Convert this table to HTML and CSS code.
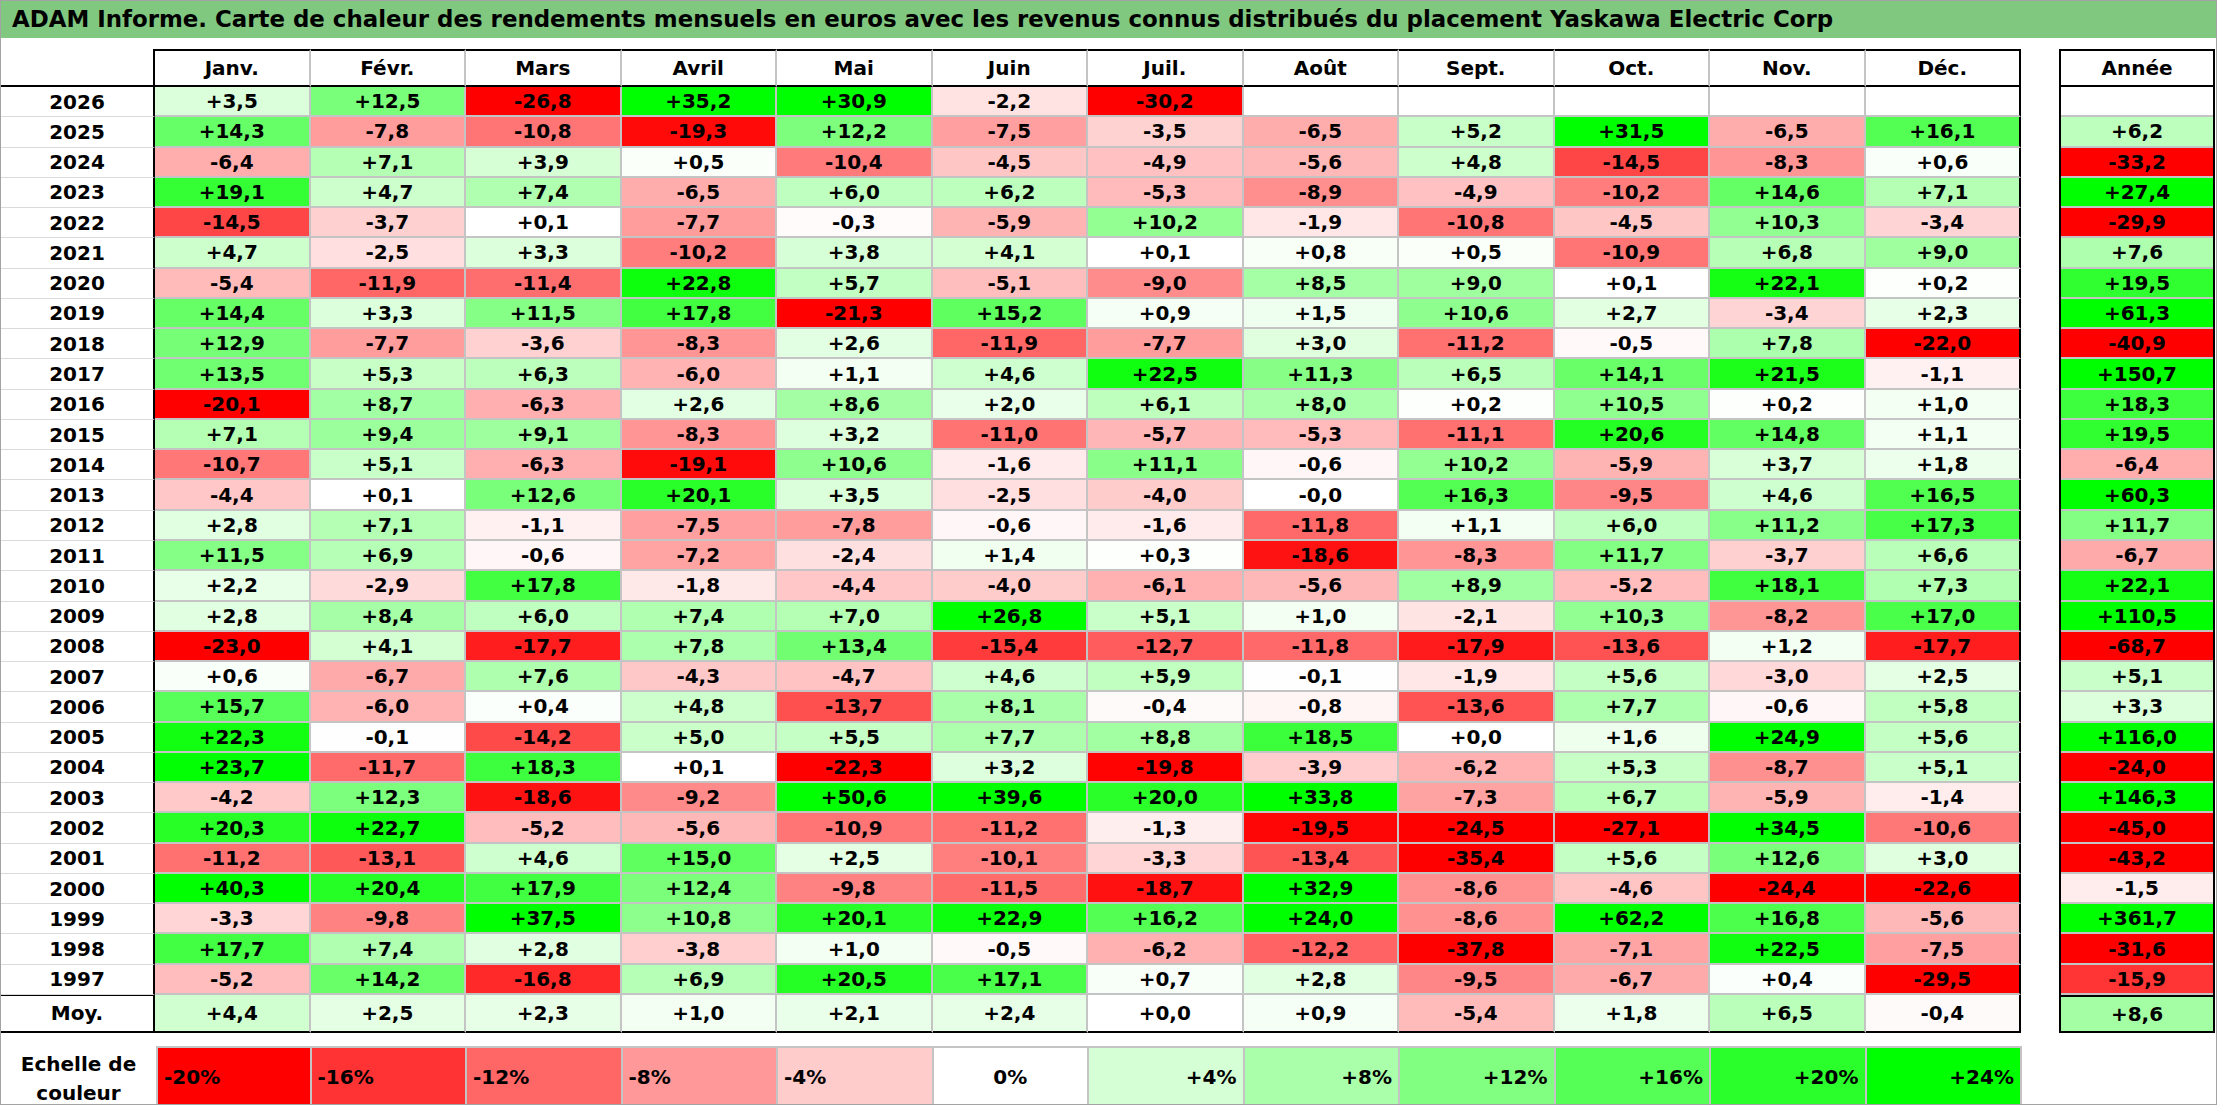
FILE: index.html
```html
<!DOCTYPE html>
<html lang="fr">
<head>
<meta charset="utf-8">
<title>ADAM Informe - Yaskawa Electric Corp</title>
<link rel="stylesheet" href="styles.css">
</head>
<body>
<div class="page">
  <div class="title">ADAM Informe. Carte de chaleur des rendements mensuels en euros avec les revenus connus distribués du placement Yaskawa Electric Corp</div>
  <div class="tables">
    <div class="main" id="main">
      <div class="corner"></div>
      <div class="mh">Janv.</div>
      <div class="mh">Févr.</div>
      <div class="mh">Mars</div>
      <div class="mh">Avril</div>
      <div class="mh">Mai</div>
      <div class="mh">Juin</div>
      <div class="mh">Juil.</div>
      <div class="mh">Août</div>
      <div class="mh">Sept.</div>
      <div class="mh">Oct.</div>
      <div class="mh">Nov.</div>
      <div class="mh last">Déc.</div>
    </div>
    <div class="annee" id="annee">
      <div class="ah">Année</div>
    </div>
  </div>
  <div class="legend">
    <div class="leglabel">Echelle de<br>couleur</div>
    <div class="lg neg" style="background:rgb(255,0,0)">-20%</div>
    <div class="lg neg" style="background:rgb(255,51,51)">-16%</div>
    <div class="lg neg" style="background:rgb(255,102,102)">-12%</div>
    <div class="lg neg" style="background:rgb(255,153,153)">-8%</div>
    <div class="lg neg" style="background:rgb(255,204,204)">-4%</div>
    <div class="lg zero" style="background:rgb(255,255,255)">0%</div>
    <div class="lg pos" style="background:rgb(213,255,213)">+4%</div>
    <div class="lg pos" style="background:rgb(170,255,170)">+8%</div>
    <div class="lg pos" style="background:rgb(128,255,128)">+12%</div>
    <div class="lg pos" style="background:rgb(85,255,85)">+16%</div>
    <div class="lg pos" style="background:rgb(43,255,43)">+20%</div>
    <div class="lg pos last" style="background:rgb(0,255,0)">+24%</div>
  </div>
</div>
<script src="script.js"></script>
</body>
</html>
```

FILE: styles.css
```css
html, body {
  margin: 0;
  padding: 0;
  background: #ffffff;
}

.page {
  width: 2217px;
  height: 1105px;
  box-sizing: border-box;
  border: 1px solid #a3a3a3;
  background: #ffffff;
  font-family: "DejaVu Sans", "Liberation Sans", sans-serif;
  font-weight: bold;
  color: #000000;
  overflow: hidden;
}

.title {
  height: 37px;
  line-height: 37px;
  background: #80c880;
  padding-left: 11px;
  font-size: 22.9px;
  white-space: nowrap;
}

.tables {
  display: flex;
  margin-top: 11px;
}

.main {
  width: 2020px;
  display: grid;
  grid-template-columns: 154px repeat(12, 155.5px);
  grid-template-rows: 38px repeat(30, 30.27px) 38px;
}

.main > div,
.annee > div,
.legend > div {
  box-sizing: border-box;
  display: flex;
  align-items: center;
  justify-content: center;
  font-size: 20px;
  white-space: nowrap;
}

.corner {
  border-right: 2px solid #000;
  border-bottom: 2px solid #000;
}

.mh {
  border-top: 2px solid #000;
  border-bottom: 2px solid #000;
  border-right: 2px solid #c4c4c4;
}

.mh.last {
  border-right: 2px solid #000;
}

.yl {
  border-right: 2px solid #000;
  border-bottom: 1px solid #dadada;
}

.c {
  border-right: 2px solid #c4c4c4;
  border-bottom: 2px solid #c4c4c4;
}

.c.last {
  border-right: 2px solid #000;
}

.yl.moy {
  border-top: 1px solid #000;
  border-bottom: 2px solid #000;
}

.c.moy {
  border-bottom: 2px solid #000;
}

.annee {
  width: 156px;
  margin-left: 38px;
  box-sizing: border-box;
  border: 2px solid #000;
  display: grid;
  grid-template-columns: 152px;
  grid-template-rows: 36px repeat(30, 30.27px) 36px;
}

.ah {
  border-bottom: 2px solid #000;
}

.ac {
  border-bottom: 2px solid #c4c4c4;
}

.ac.moy {
  border-top: 2px solid #000;
  border-bottom: none;
}

.legend {
  display: grid;
  grid-template-columns: 155px repeat(12, 155.5px);
  width: 2021px;
  height: 58px;
  margin-top: 13px;
}

.leglabel {
  flex-direction: column;
  text-align: center;
  line-height: 29px;
  padding-top: 4px;
}

.lg {
  border-top: 2px solid #c4c4c4;
  border-right: 2px solid #c4c4c4;
  padding: 0 6px 2px;
}

.lg:nth-child(2) {
  border-left: 2px solid #c4c4c4;
}

.legend > .lg.neg {
  justify-content: flex-start;
}

.legend > .lg.pos {
  justify-content: flex-end;
}
```

FILE: script.js
```js
(function () {
  var data = [
    ["2026", "+3,5 +12,5 -26,8 +35,2 +30,9 -2,2 -30,2 _ _ _ _ _", "_"],
    ["2025", "+14,3 -7,8 -10,8 -19,3 +12,2 -7,5 -3,5 -6,5 +5,2 +31,5 -6,5 +16,1", "+6,2"],
    ["2024", "-6,4 +7,1 +3,9 +0,5 -10,4 -4,5 -4,9 -5,6 +4,8 -14,5 -8,3 +0,6", "-33,2"],
    ["2023", "+19,1 +4,7 +7,4 -6,5 +6,0 +6,2 -5,3 -8,9 -4,9 -10,2 +14,6 +7,1", "+27,4"],
    ["2022", "-14,5 -3,7 +0,1 -7,7 -0,3 -5,9 +10,2 -1,9 -10,8 -4,5 +10,3 -3,4", "-29,9"],
    ["2021", "+4,7 -2,5 +3,3 -10,2 +3,8 +4,1 +0,1 +0,8 +0,5 -10,9 +6,8 +9,0", "+7,6"],
    ["2020", "-5,4 -11,9 -11,4 +22,8 +5,7 -5,1 -9,0 +8,5 +9,0 +0,1 +22,1 +0,2", "+19,5"],
    ["2019", "+14,4 +3,3 +11,5 +17,8 -21,3 +15,2 +0,9 +1,5 +10,6 +2,7 -3,4 +2,3", "+61,3"],
    ["2018", "+12,9 -7,7 -3,6 -8,3 +2,6 -11,9 -7,7 +3,0 -11,2 -0,5 +7,8 -22,0", "-40,9"],
    ["2017", "+13,5 +5,3 +6,3 -6,0 +1,1 +4,6 +22,5 +11,3 +6,5 +14,1 +21,5 -1,1", "+150,7"],
    ["2016", "-20,1 +8,7 -6,3 +2,6 +8,6 +2,0 +6,1 +8,0 +0,2 +10,5 +0,2 +1,0", "+18,3"],
    ["2015", "+7,1 +9,4 +9,1 -8,3 +3,2 -11,0 -5,7 -5,3 -11,1 +20,6 +14,8 +1,1", "+19,5"],
    ["2014", "-10,7 +5,1 -6,3 -19,1 +10,6 -1,6 +11,1 -0,6 +10,2 -5,9 +3,7 +1,8", "-6,4"],
    ["2013", "-4,4 +0,1 +12,6 +20,1 +3,5 -2,5 -4,0 -0,0 +16,3 -9,5 +4,6 +16,5", "+60,3"],
    ["2012", "+2,8 +7,1 -1,1 -7,5 -7,8 -0,6 -1,6 -11,8 +1,1 +6,0 +11,2 +17,3", "+11,7"],
    ["2011", "+11,5 +6,9 -0,6 -7,2 -2,4 +1,4 +0,3 -18,6 -8,3 +11,7 -3,7 +6,6", "-6,7"],
    ["2010", "+2,2 -2,9 +17,8 -1,8 -4,4 -4,0 -6,1 -5,6 +8,9 -5,2 +18,1 +7,3", "+22,1"],
    ["2009", "+2,8 +8,4 +6,0 +7,4 +7,0 +26,8 +5,1 +1,0 -2,1 +10,3 -8,2 +17,0", "+110,5"],
    ["2008", "-23,0 +4,1 -17,7 +7,8 +13,4 -15,4 -12,7 -11,8 -17,9 -13,6 +1,2 -17,7", "-68,7"],
    ["2007", "+0,6 -6,7 +7,6 -4,3 -4,7 +4,6 +5,9 -0,1 -1,9 +5,6 -3,0 +2,5", "+5,1"],
    ["2006", "+15,7 -6,0 +0,4 +4,8 -13,7 +8,1 -0,4 -0,8 -13,6 +7,7 -0,6 +5,8", "+3,3"],
    ["2005", "+22,3 -0,1 -14,2 +5,0 +5,5 +7,7 +8,8 +18,5 +0,0 +1,6 +24,9 +5,6", "+116,0"],
    ["2004", "+23,7 -11,7 +18,3 +0,1 -22,3 +3,2 -19,8 -3,9 -6,2 +5,3 -8,7 +5,1", "-24,0"],
    ["2003", "-4,2 +12,3 -18,6 -9,2 +50,6 +39,6 +20,0 +33,8 -7,3 +6,7 -5,9 -1,4", "+146,3"],
    ["2002", "+20,3 +22,7 -5,2 -5,6 -10,9 -11,2 -1,3 -19,5 -24,5 -27,1 +34,5 -10,6", "-45,0"],
    ["2001", "-11,2 -13,1 +4,6 +15,0 +2,5 -10,1 -3,3 -13,4 -35,4 +5,6 +12,6 +3,0", "-43,2"],
    ["2000", "+40,3 +20,4 +17,9 +12,4 -9,8 -11,5 -18,7 +32,9 -8,6 -4,6 -24,4 -22,6", "-1,5"],
    ["1999", "-3,3 -9,8 +37,5 +10,8 +20,1 +22,9 +16,2 +24,0 -8,6 +62,2 +16,8 -5,6", "+361,7"],
    ["1998", "+17,7 +7,4 +2,8 -3,8 +1,0 -0,5 -6,2 -12,2 -37,8 -7,1 +22,5 -7,5", "-31,6"],
    ["1997", "-5,2 +14,2 -16,8 +6,9 +20,5 +17,1 +0,7 +2,8 -9,5 -6,7 +0,4 -29,5", "-15,9"],
    ["Moy.", "+4,4 +2,5 +2,3 +1,0 +2,1 +2,4 +0,0 +0,9 -5,4 +1,8 +6,5 -0,4", "+8,6"]
  ];

  function colour(txt) {
    if (txt === "_") return "#ffffff";
    var v = parseFloat(txt.replace(",", "."));
    var t, k;
    if (v < 0) {
      t = Math.min(1, -v / 20);
      k = Math.round(255 * (1 - t));
      return "rgb(255," + k + "," + k + ")";
    }
    t = Math.min(1, v / 24);
    k = Math.round(255 * (1 - t));
    return "rgb(" + k + ",255," + k + ")";
  }

  function cell(cls, txt) {
    var d = document.createElement("div");
    d.className = cls;
    d.textContent = txt === "_" ? "" : txt;
    d.style.background = colour(txt);
    return d;
  }

  var main = document.getElementById("main");
  var annee = document.getElementById("annee");

  data.forEach(function (row, i) {
    var isMoy = i === data.length - 1;
    var extra = isMoy ? " moy" : "";
    var lab = document.createElement("div");
    lab.className = "yl" + extra;
    lab.textContent = row[0];
    main.appendChild(lab);
    var vals = row[1].split(" ");
    vals.forEach(function (v, j) {
      main.appendChild(cell("c" + extra + (j === 11 ? " last" : ""), v));
    });
    annee.appendChild(cell("ac" + extra, row[2]));
  });
})();
```
